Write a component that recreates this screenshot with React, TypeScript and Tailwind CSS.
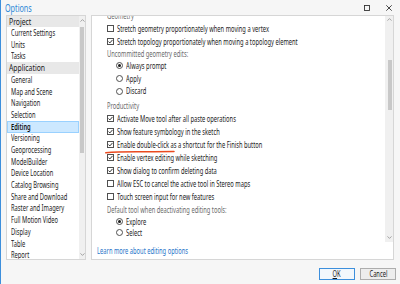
import React from "react";

const S = "inline-block whitespace-nowrap origin-left scale-x-[0.72] leading-none";

function Txt({ children, className = "" }: { children: React.ReactNode; className?: string }) {
  return <span className={S + " " + className}>{children}</span>;
}

function Chevron({ up }: { up?: boolean }) {
  return (
    <svg width="5" height="3" viewBox="0 0 5 3" className="block">
      <path
        d={up ? "M0.5 2.6 L2.5 0.6 L4.5 2.6" : "M0.5 0.4 L2.5 2.4 L4.5 0.4"}
        fill="none"
        stroke="#8f8f8f"
        strokeWidth="0.8"
      />
    </svg>
  );
}

function Checkbox({ checked }: { checked: boolean }) {
  return (
    <span className="w-[7px] h-[7px] border border-[#505050] bg-white flex items-center justify-center shrink-0">
      {checked && (
        <svg width="5" height="5" viewBox="0 0 5 5" className="block">
          <path d="M0.5 2.6 L1.9 3.9 L4.5 0.9" fill="none" stroke="#1a1a1a" strokeWidth="0.9" />
        </svg>
      )}
    </span>
  );
}

function Radio({ selected }: { selected: boolean }) {
  return (
    <span className="w-[7px] h-[7px] rounded-full border border-[#505050] bg-white flex items-center justify-center shrink-0">
      {selected && <span className="w-[3px] h-[3px] rounded-full bg-[#1a1a1a]" />}
    </span>
  );
}

function CheckRow({ checked, label, children }: { checked: boolean; label: string; children?: React.ReactNode }) {
  return (
    <div className="relative h-[13px] flex items-center gap-[3px]">
      <Checkbox checked={checked} />
      <Txt>{label}</Txt>
      {children}
    </div>
  );
}

function RadioRow({ selected, label, h }: { selected: boolean; label: string; h: string }) {
  return (
    <div className={"flex items-center gap-[3px] pl-[9px] " + h}>
      <Radio selected={selected} />
      <Txt>{label}</Txt>
    </div>
  );
}

function ListHeader({ label, h }: { label: string; h: string }) {
  return (
    <div className={"shrink-0 flex items-center bg-[#e8e8e8] pl-[1.5px] text-[9.5px] text-[#1a1a1a] " + h}>
      <Txt>{label}</Txt>
    </div>
  );
}

function ListItem({ label, selected }: { label: string; selected?: boolean }) {
  if (selected) {
    return (
      <div className="shrink-0 h-[11.7px] flex items-center pl-[3px] bg-[#cce8ff] border border-[#99d1ff] text-[8px] font-semibold text-[#111]">
        <Txt>{label}</Txt>
      </div>
    );
  }
  return (
    <div className="shrink-0 h-[11.7px] flex items-center pl-[4px] text-[8px] text-[#1a1a1a]">
      <Txt>{label}</Txt>
    </div>
  );
}

export default function App() {
  const appItems = [
    "General",
    "Map and Scene",
    "Navigation",
    "Selection",
    "Editing",
    "Versioning",
    "Geoprocessing",
    "ModelBuilder",
    "Device Location",
    "Catalog Browsing",
    "Share and Download",
    "Raster and Imagery",
    "Full Motion Video",
    "Display",
    "Table",
    "Report",
  ];

  return (
    <div className="w-[400px] h-[284px] overflow-hidden bg-[#f6f6f6] border-l border-[#3d8fdc] flex flex-col font-['Noto_Sans','Open_Sans',sans-serif] text-[#1a1a1a]">
      {/* title bar */}
      <div className="h-[15px] flex items-center pl-[4px] pr-[8px]">
        <span className="text-[10px] text-[#2b87d6] leading-none inline-block origin-left scale-x-[0.72] whitespace-nowrap">
          Options
        </span>
        <div className="ml-auto flex items-center gap-[16px]">
          <svg width="6" height="6" viewBox="0 0 6 6" className="block">
            <rect x="0.5" y="0.5" width="5" height="5" fill="none" stroke="#333" strokeWidth="0.9" />
          </svg>
          <svg width="6" height="6" viewBox="0 0 6 6" className="block">
            <path d="M0.3 0.3 L5.7 5.7 M5.7 0.3 L0.3 5.7" stroke="#333" strokeWidth="0.9" />
          </svg>
        </div>
      </div>

      {/* main */}
      <div className="h-[245px] flex gap-[5px] ml-[5px]">
        {/* left panel */}
        <div className="w-[80px] h-full border border-[#d6d6d6] bg-white flex overflow-hidden">
          <div className="flex-1 flex flex-col overflow-hidden">
            <ListHeader label="Project" h="h-[11px]" />
            <ListItem label="Current Settings" />
            <ListItem label="Units" />
            <ListItem label="Tasks" />
            <ListHeader label="Application" h="h-[12px]" />
            {appItems.map((it) => (
              <ListItem key={it} label={it} selected={it === "Editing"} />
            ))}
          </div>
          <div className="w-[6px] bg-[#f0f0f0] flex flex-col items-center">
            <div className="h-[8px] flex items-center justify-center">
              <Chevron up />
            </div>
            <div className="mt-[3px] w-[4px] h-[126px] bg-[#c8c8c8]" />
            <div className="flex-1" />
            <div className="h-[10px] flex items-center justify-center">
              <Chevron />
            </div>
          </div>
        </div>

        {/* right panel */}
        <div className="w-[303px] h-full border border-[#d6d6d6] bg-white flex flex-col">
          <div className="h-[226px] flex">
            <div className="flex-1 overflow-hidden text-[8px]">
              <div className="-mt-[7px] pl-[15px] flex flex-col">
                <div className="h-[13px] flex items-center text-[#6a6a6a]">
                  <Txt>Geometry</Txt>
                </div>
                <CheckRow checked={false} label="Stretch geometry proportionately when moving a vertex" />
                <CheckRow checked={true} label="Stretch topology proportionately when moving a topology element" />
                <div className="h-[11px] flex items-center text-[#6a6a6a]">
                  <Txt>Uncommitted geometry edits:</Txt>
                </div>
                <RadioRow selected={true} label="Always prompt" h="h-[13px]" />
                <RadioRow selected={false} label="Apply" h="h-[13px]" />
                <RadioRow selected={false} label="Discard" h="h-[12px]" />
                <div className="mt-[2px] h-[13px] flex items-center text-[#6a6a6a]">
                  <Txt>Productivity</Txt>
                </div>
                <CheckRow checked={true} label="Activate Move tool after all paste operations" />
                <CheckRow checked={true} label="Show feature symbology in the sketch" />
                <CheckRow checked={true} label="Enable double-click as a shortcut for the Finish button">
                  <svg
                    width="70"
                    height="4"
                    viewBox="0 0 70 4"
                    className="absolute left-[-2px] top-[12px] block"
                  >
                    <path d="M0.8 2.8 Q 12 1.6 35 1.7 T 69 1.6" fill="none" stroke="#ea4a1f" strokeWidth="1.5" strokeLinecap="round" />
                  </svg>
                </CheckRow>
                <CheckRow checked={true} label="Enable vertex editing while sketching" />
                <CheckRow checked={true} label="Show dialog to confirm deleting data" />
                <CheckRow checked={false} label="Allow ESC to cancel the active tool in Stereo maps" />
                <CheckRow checked={false} label="Touch screen input for new features" />
                <div className="h-[13px] flex items-center text-[#6a6a6a]">
                  <Txt>Default tool when deactivating editing tools:</Txt>
                </div>
                <RadioRow selected={true} label="Explore" h="h-[11px]" />
                <RadioRow selected={false} label="Select" h="h-[11px]" />
              </div>
            </div>
            <div className="w-[8px] bg-[#f0f0f0] flex flex-col items-center">
              <div className="h-[7px] flex items-center justify-center">
                <Chevron up />
              </div>
              <div className="mt-[37px] ml-[1px] w-[4px] h-[50px] bg-[#c8c8c8]" />
              <div className="flex-1" />
              <div className="h-[10px] flex items-center justify-center">
                <Chevron />
              </div>
            </div>
          </div>
          <div className="h-[17px] flex items-center pl-[5px] text-[8px] text-[#2574c9]">
            <Txt>Learn more about editing options</Txt>
          </div>
        </div>
      </div>

      {/* buttons */}
      <div className="flex justify-end gap-[5px] pr-[4px] pt-[8px]">
        <div className="w-[36px] h-[12px] border border-[#3d8fdc] bg-[#f2f7fc] flex items-center justify-center text-[8px]">
          <span className="inline-block scale-x-[0.72] leading-none whitespace-nowrap">
            <span className="underline">O</span>K
          </span>
        </div>
        <div className="w-[36px] h-[12px] border border-[#adadad] bg-[#ededed] flex items-center justify-center text-[8px]">
          <span className="inline-block scale-x-[0.72] leading-none whitespace-nowrap">Cancel</span>
        </div>
      </div>
    </div>
  );
}
